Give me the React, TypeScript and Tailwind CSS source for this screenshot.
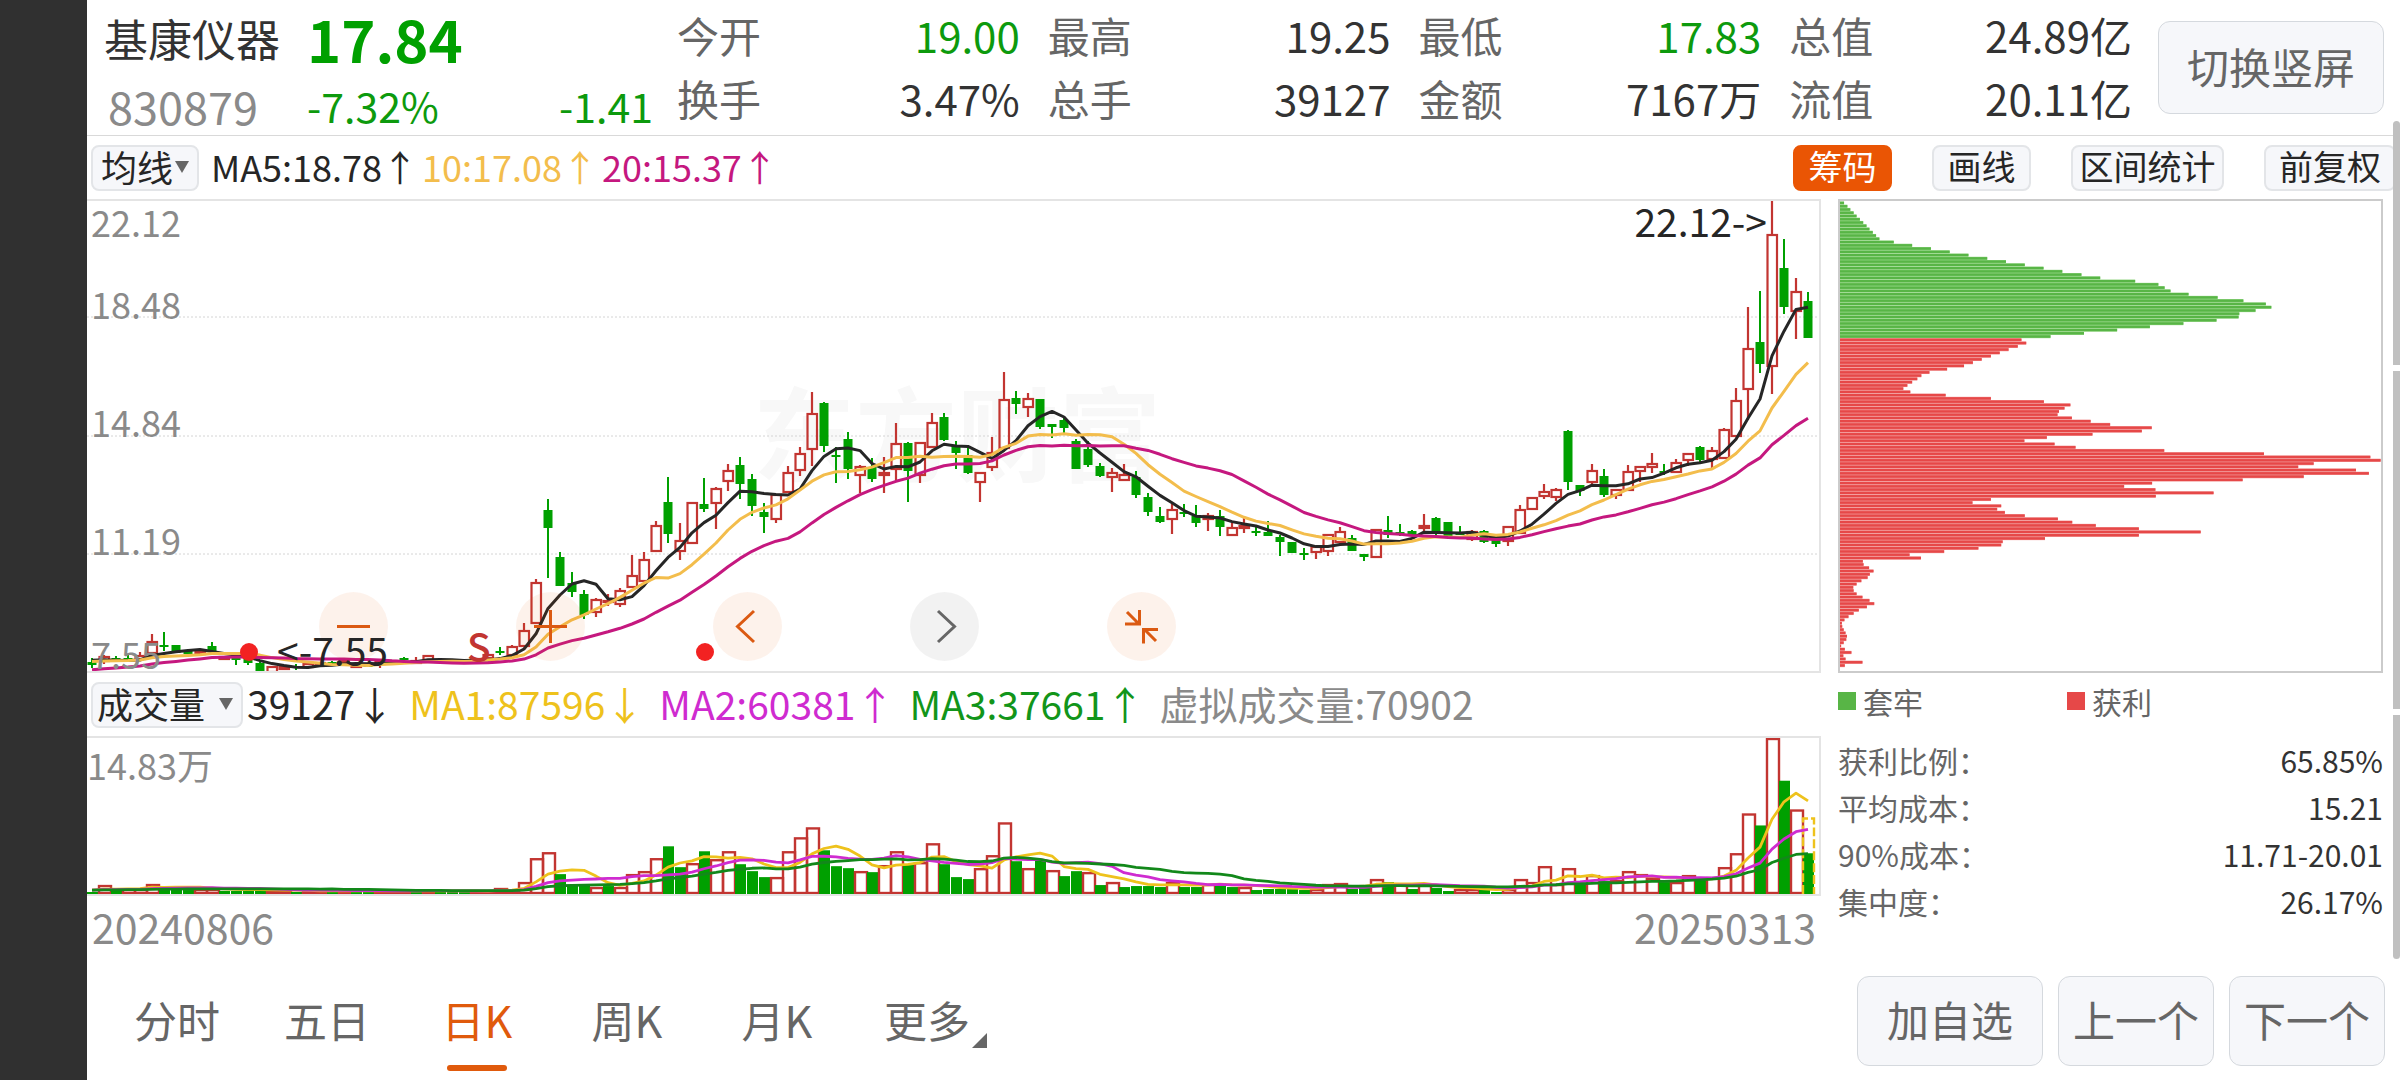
import React, { useState } from 'react';
import { clsx } from 'clsx';

const quotes = [
  { label: '今开', value: '19.00', down: true },
  { label: '最高', value: '19.25' },
  { label: '最低', value: '17.83', down: true },
  { label: '总值', value: '24.89亿' },
  { label: '换手', value: '3.47%' },
  { label: '总手', value: '39127' },
  { label: '金额', value: '7167万' },
  { label: '流值', value: '20.11亿' },
];

const chipStats = [
  { label: '获利比例：', value: '65.85%' },
  { label: '平均成本：', value: '15.21' },
  { label: '90%成本：', value: '11.71-20.01' },
  { label: '集中度：', value: '26.17%' },
];

const periods = ['分时', '五日', '日K', '周K', '月K', '更多'];

const RED = '#c23531';
const GREEN = '#00a000';

// kind, high, body top, body bottom, low (chart units, 0 = 22.12, 472 = 7.55)
type Candle = [string, number, number, number, number];

const candles: Candle[] = [
  ['g', 458, 462, 465, 468], ['r', 455, 457, 461, 464], ['g', 456, 458, 461, 462], ['g', 455, 458, 461, 462],
  ['r', 452, 456, 459, 460], ['r', 434, 442, 453, 456], ['g', 432, 445, 447, 451], ['g', 445, 445, 453, 453],
  ['g', 449, 450, 454, 455], ['r', 449, 452, 454, 456], ['g', 442, 446, 452, 453], ['r', 456, 457, 459, 460],
  ['g', 457, 458, 460, 465], ['g', 457, 458, 463, 465], ['g', 462, 463, 471, 472], ['r', 467, 467, 472, 472],
  ['r', 466, 467, 469, 470], ['g', 464, 466, 468, 470], ['r', 463, 464, 467, 468], ['r', 462, 463, 465, 467],
  ['g', 461, 462, 464, 466], ['r', 459, 461, 463, 465], ['r', 464, 465, 467, 467], ['g', 463, 465, 466, 467],
  ['r', 459, 461, 464, 468], ['r', 460, 461, 463, 464], ['g', 457, 458, 460, 461], ['r', 457, 461, 463, 464],
  ['r', 456, 456, 460, 460], ['r', 458, 460, 462, 464], ['g', 459, 460, 462, 463], ['g', 461, 462, 464, 464],
  ['r', 458, 459, 462, 463], ['r', 454, 455, 458, 459], ['g', 447, 451, 453, 455], ['r', 445, 447, 455, 456],
  ['r', 423, 431, 446, 447], ['r', 379, 383, 423, 423], ['g', 299, 310, 328, 378], ['g', 352, 357, 386, 386],
  ['g', 372, 383, 392, 397], ['g', 390, 394, 415, 419], ['r', 398, 400, 412, 417], ['r', 394, 401, 402, 406],
  ['r', 388, 391, 404, 407], ['r', 355, 376, 387, 387], ['r', 352, 360, 381, 381], ['r', 321, 326, 351, 351],
  ['g', 277, 302, 334, 343], ['r', 323, 341, 351, 360], ['r', 303, 303, 343, 343], ['g', 278, 304, 309, 312],
  ['r', 287, 289, 303, 329], ['r', 264, 271, 281, 291], ['g', 257, 265, 284, 299], ['g', 274, 279, 306, 316],
  ['g', 303, 312, 317, 333], ['r', 295, 295, 319, 323], ['r', 266, 273, 292, 292], ['r', 247, 254, 270, 276],
  ['r', 192, 214, 249, 266], ['g', 202, 203, 246, 252], ['g', 247, 255, 257, 283], ['g', 232, 239, 269, 279],
  ['r', 265, 267, 275, 293], ['g', 258, 267, 279, 282], ['r', 257, 273, 275, 293], ['r', 223, 244, 269, 281],
  ['g', 242, 243, 271, 302], ['r', 243, 243, 275, 283], ['r', 213, 223, 247, 247], ['g', 213, 217, 240, 241],
  ['g', 241, 245, 253, 269], ['g', 246, 255, 273, 274], ['r', 273, 273, 282, 302], ['r', 237, 253, 267, 271],
  ['r', 172, 200, 248, 248], ['g', 191, 198, 204, 214], ['r', 193, 199, 207, 217], ['g', 199, 199, 227, 229],
  ['g', 224, 224, 227, 238], ['g', 217, 220, 228, 233], ['g', 239, 241, 269, 269], ['g', 241, 249, 265, 267],
  ['g', 263, 266, 276, 277], ['r', 268, 273, 277, 292], ['r', 264, 275, 280, 280], ['g', 271, 277, 295, 298],
  ['g', 293, 297, 312, 316], ['g', 307, 316, 322, 323], ['r', 304, 310, 319, 334], ['g', 304, 312, 314, 317],
  ['g', 305, 316, 323, 327], ['r', 313, 316, 319, 331], ['g', 310, 316, 327, 336], ['r', 323, 328, 335, 335],
  ['r', 318, 326, 328, 333], ['g', 327, 331, 333, 336], ['g', 321, 332, 336, 336], ['g', 335, 337, 342, 356],
  ['g', 342, 342, 353, 353], ['g', 348, 353, 355, 360], ['r', 347, 347, 352, 359], ['r', 335, 335, 351, 356],
  ['r', 327, 332, 342, 342], ['g', 335, 338, 351, 351], ['g', 354, 354, 357, 361], ['r', 330, 330, 357, 357],
  ['g', 316, 330, 335, 338], ['g', 324, 332, 334, 336], ['g', 330, 331, 336, 336], ['r', 314, 326, 328, 333],
  ['g', 317, 318, 332, 335], ['g', 322, 322, 336, 338], ['g', 326, 333, 335, 335], ['r', 330, 332, 339, 341],
  ['g', 330, 331, 342, 343], ['g', 338, 339, 344, 347], ['r', 327, 327, 341, 346], ['r', 305, 310, 333, 333],
  ['r', 298, 298, 309, 310], ['r', 284, 292, 296, 299], ['r', 288, 290, 297, 301], ['g', 230, 231, 282, 290],
  ['g', 285, 285, 291, 296], ['r', 264, 271, 282, 285], ['g', 269, 276, 295, 297], ['r', 290, 290, 295, 299],
  ['r', 265, 272, 290, 290], ['r', 267, 267, 271, 282], ['r', 253, 264, 267, 273], ['g', 264, 271, 273, 275],
  ['r', 259, 263, 272, 272], ['r', 254, 254, 260, 266], ['g', 246, 247, 260, 262], ['r', 247, 251, 259, 268],
  ['r', 228, 230, 258, 258], ['r', 188, 201, 236, 236], ['r', 107, 149, 189, 220], ['g', 91, 142, 164, 173],
  ['r', 0, 35, 166, 194], ['g', 39, 68, 107, 114], ['r', 78, 92, 111, 139], ['g', 92, 101, 138, 138],
];

const volumes = [
  2, 8, 4, 4, 4, 9, 7, 6, 4, 4, 4, 3, 3, 3, 4, 3, 2, 2, 2, 2, 3, 2, 2, 2, 3, 2, 2, 2, 3, 2, 2, 2, 2, 2, 5, 3,
  11, 35, 41, 20, 9, 9, 6, 8, 6, 19, 22, 35, 48, 27, 30, 43, 34, 42, 30, 23, 17, 16, 42, 56, 66, 44, 28, 26,
  22, 22, 28, 42, 30, 31, 50, 30, 17, 15, 25, 38, 71, 33, 25, 34, 23, 18, 23, 21, 9, 11, 7, 8, 8, 7, 11, 7,
  7, 9, 11, 7, 6, 4, 5, 5, 5, 4, 4, 9, 10, 5, 6, 14, 12, 9, 5, 9, 6, 3, 4, 4, 4, 2, 4, 14, 11, 27, 9, 25,
  11, 18, 13, 13, 22, 19, 15, 12, 11, 18, 14, 16, 26, 40, 80, 69, 156, 114, 84, 41,
];

const trapped = [
  11, 20, 28, 37, 45, 54, 63, 72, 80, 89, 98, 107, 146, 196, 247, 298, 349, 400, 451, 502, 553, 604, 656, 707,
  802, 865, 882, 898, 947, 1026, 1096, 1157, 1172, 1129, 1085, 1083, 1023, 933, 842, 753, 663, 572,
];

const profit = [
  493, 506, 483, 458, 434, 410, 385, 361, 337, 291, 243, 221, 210, 196, 183, 172, 191, 287, 410, 554, 626, 610,
  595, 591, 630, 681, 734, 847, 820, 686, 562, 501, 583, 640, 881, 1152, 1441, 1469, 1287, 1245, 1402, 1437,
  1260, 1094, 848, 772, 857, 1015, 858, 410, 360, 438, 427, 448, 502, 592, 631, 695, 812, 980, 812, 557, 442,
  438, 376, 283, 189, 220, 62, 64, 79, 91, 81, 75, 58, 45, 36, 37, 45, 61, 80, 93, 73, 51, 37, 23, 12, 5, 6,
  10, 15, 19, 17, 10, 3, 13, 31, 9, 15, 61, 13,
];

const xAt = (i: number) => 5 + i * 12;

const closes = candles.map((c) => (c[0] === 'r' ? c[2] : c[3]));

// closes of the sessions left of the visible range
const earlierCloses = [...Array(10).fill(478), ...Array(5).fill(463), ...Array(4).fill(459)];
const earlierVolumes = Array(19).fill(3);

function average(earlier: number[], data: number[], n: number) {
  const all = [...earlier, ...data];
  return data.map((_, i) => {
    const end = i + earlier.length + 1;
    return all.slice(end - n, end).reduce((a, b) => a + b, 0) / n;
  });
}

const toPoints = (ys: number[]) => ys.map((y, i) => `${xAt(i)},${y.toFixed(1)}`).join(' ');

function CandleChart() {
  const averages = [
    { n: 5, color: '#262626' },
    { n: 10, color: '#f3bd4c' },
    { n: 20, color: '#c5187f' },
  ];
  return (
    <svg viewBox="0 1 1732 470" preserveAspectRatio="none" className="relative block h-full w-full">
      {[117, 236, 354].map((y) => (
        <line key={y} x1="0" x2="1732" y1={y} y2={y} stroke="#d4d4d4" strokeDasharray="2 2" />
      ))}
      {candles.map(([kind, high, top, bottom, low], i) => {
        const x = xAt(i);
        if (kind === 'g') {
          return (
            <g key={i} fill={GREEN}>
              <rect x={x - 1} y={high} width="2" height={low - high} />
              <rect x={x - 4.5} y={top} width="9" height={Math.max(bottom - top, 2)} />
            </g>
          );
        }
        return (
          <g key={i} stroke={RED} strokeWidth="2.2" fill="none">
            <path d={`M${x} ${high}V${top}M${x} ${bottom}V${low}`} />
            <rect x={x - 4.5} y={top} width="9.5" height={Math.max(bottom - top, 1)} />
          </g>
        );
      })}
      {averages.map(({ n, color }) => (
        <polyline
          key={n}
          points={toPoints(average(earlierCloses, closes, n))}
          fill="none"
          stroke={color}
          strokeWidth="3"
          strokeLinejoin="round"
        />
      ))}
    </svg>
  );
}

function VolumeChart() {
  const averages = [
    { n: 5, color: '#eec21c' },
    { n: 10, color: '#cf2bd0' },
    { n: 20, color: '#12881a' },
  ];
  return (
    <svg viewBox="0 0 1732 157" preserveAspectRatio="none" className="block h-full w-full">
      {volumes.map((v, i) => {
        const rising = i > 0 && closes[i] <= closes[i - 1];
        return rising ? (
          <rect key={i} x={xAt(i) - 5} y={157 - v} width="12" height={v - 1} fill="none" stroke={RED} strokeWidth="2.4" />
        ) : (
          <rect key={i} x={xAt(i) - 5} y={157 - v} width="11" height={v} fill={GREEN} />
        );
      })}
      <path d="M1716 157V81H1727V157" fill="none" stroke="#eec21c" strokeWidth="2.4" strokeDasharray="9 3" />
      {averages.map(({ n, color }) => (
        <polyline
          key={n}
          points={toPoints(average(earlierVolumes, volumes, n).map((v) => 156 - v))}
          fill="none"
          stroke={color}
          strokeWidth="2.8"
          strokeLinejoin="round"
        />
      ))}
    </svg>
  );
}

function ChipChart() {
  const pitch = 3.257;
  return (
    <svg viewBox="0 0 1470 470" preserveAspectRatio="none" className="block h-full w-full">
      {[...trapped, ...profit].map((w, i) => {
        const green = i < trapped.length;
        const y = 0.4 + i * pitch;
        return (
          <g key={i}>
            <rect x="0" y={y} width={w} height={pitch} fill={green ? '#8fd47f' : '#f08b8b'} />
            <rect x="0" y={y + 0.4} width={w} height={pitch - 0.9} fill={green ? '#58b546' : '#e64848'} />
          </g>
        );
      })}
    </svg>
  );
}

const roundButtons = [
  { label: '缩小', d: 'M18 34.5H51' },
  { label: '放大', d: 'M18 34.5H51M34.5 18V51' },
  { label: '左移', d: 'M41 19L24.5 34.5L41 50' },
  { label: '右移', d: 'M28 19L44.5 34.5L28 50', muted: true },
  { label: '收起', d: 'M20 20L32 32M18 32H32.5V18M49 49L37 37M51 37.5H36.5V51.5' },
];

function PickList({ label, value, className }: { label: string; value: string; className: string }) {
  return (
    <div className="relative">
      <select
        aria-label={label}
        defaultValue={value}
        className={clsx(
          'block h-[46px] appearance-none rounded-lg border-2 border-[#e3e5e8] bg-[#f6f7fa] pb-1 text-[36px] leading-[38px] text-[#262626]',
          className
        )}
      >
        <option>{value}</option>
      </select>
      <svg viewBox="0 0 14 12" className="pointer-events-none absolute top-4 right-2.5 h-3 w-3.5">
        <path d="M0 0H14L7 12Z" fill="#666" />
      </svg>
    </div>
  );
}

const toolButtons = [
  { name: '筹码', width: 'w-[99px]' },
  { name: '画线', width: 'w-[99px]' },
  { name: '区间统计', width: 'w-[153px]' },
  { name: '前复权', width: 'w-[132px]' },
];

export default function App() {
  const [tool, setTool] = useState('筹码');
  const [period, setPeriod] = useState('日K');

  return (
    <div className="relative flex min-h-screen bg-white font-['Noto_Sans_CJK_SC',sans-serif] leading-none text-[#333]">
      <div className="w-[87px] shrink-0 bg-[#303030]" />

      <div className="flex min-w-0 flex-1 flex-col">
        <header className="flex h-[136px] items-center border-b border-[#d9d9d9] pr-4">
          <div className="grid h-full w-[590px] grid-cols-[203px_1fr_auto] grid-rows-[76px_59px] items-center pr-6 pl-[17px]">
            <h1 className="text-[44px]">基康仪器</h1>
            <strong className="col-span-2 text-[58px] leading-[76px] font-bold text-[#00a000]">17.84</strong>
            <span className="pl-1 text-[45px]  text-[#8a8a8a]">830879</span>
            <span className="text-[41px] text-[#0d9a0d]">-7.32%</span>
            <span className="text-[41px] text-[#0d9a0d]">-1.41</span>
          </div>
          <dl className="grid flex-1 grid-cols-4 gap-x-7 pb-[3px] text-[42px] leading-[63px]">
            {quotes.map((q) => (
              <div key={q.label} className="flex justify-between">
                <dt className="text-[#666]">{q.label}</dt>
                <dd className={clsx(q.down && 'text-[#0d9a0d]')}>{q.value}</dd>
              </div>
            ))}
          </dl>
          <button className="ml-[26px] h-[93px] w-[226px] rounded-xl border border-[#d5d9de] bg-[#f6f7fa] pb-1 text-[42px] text-[#666]">
            切换竖屏
          </button>
        </header>

        <div className="flex h-[63px] items-center pl-1">
          <PickList label="主图指标" value="均线" className="w-[108px] pl-2" />
          <div className="ml-3 flex gap-1 pb-1 text-[36px]">
            <span className="text-[#262626]">MA5:18.78↑</span>
            <span className="text-[#f3bd4c]">10:17.08↑</span>
            <span className="text-[#c5187f]">20:15.37↑</span>
          </div>
          <div className="ml-auto flex gap-10 pr-1">
            {toolButtons.map((b) => (
              <button
                key={b.name}
                onClick={() => setTool(b.name)}
                className={clsx(
                  'h-[46px] rounded-lg border-2 pb-1 text-[34px]',
                  b.width,
                  tool === b.name
                    ? 'border-[#ea5504] bg-[#ea5504] text-white'
                    : 'border-[#e3e5e8] bg-[#f6f7fa] text-[#262626]'
                )}
              >
                {b.name}
              </button>
            ))}
          </div>
        </div>

        <main className="flex gap-[17px] pr-[17px]">
          <section className="min-w-0 flex-1">
            <div className="relative h-[474px] border-2 border-l-0 border-[#e4e4e4]">
              <div className="absolute inset-x-0 top-[178px] pl-2 text-center text-[102px] font-bold text-[#f8f8f8]">
                东方财富
              </div>
              <CandleChart />
              <div className="absolute inset-y-0 left-1 text-[36px] text-[#8a8a8a]">
                <span className="absolute top-0.5">22.12</span>
                <span className="absolute top-[84px]">18.48</span>
                <span className="absolute top-[202px]">14.84</span>
                <span className="absolute top-[320px]">11.19</span>
                <span className="absolute bottom-0">7.55</span>
              </div>
              <span className="absolute top-0 right-[52px] text-[39px] text-[#262626]">22.12-&gt;</span>
              <div className="absolute bottom-2.5 left-[232px] flex gap-32">
                {roundButtons.map((b) => (
                  <button
                    key={b.label}
                    aria-label={b.label}
                    className={clsx(
                      'h-[69px] w-[69px] rounded-full',
                      b.muted ? 'bg-black/5 text-[#666]' : 'bg-[#ea5504]/8 text-[#db5a12]'
                    )}
                  >
                    <svg viewBox="0 0 69 69" fill="none" stroke="currentColor" strokeWidth="3">
                      <path d={b.d} />
                    </svg>
                  </button>
                ))}
              </div>
              <span className="absolute bottom-0.5 left-[190px] text-[39px] text-[#262626]">&lt;-7.55</span>
              <span className="absolute bottom-1.5 left-[380px] text-[39px] font-medium text-[#c23531]">S</span>
              <i className="absolute bottom-2.5 left-[153px] h-[18px] w-[18px] rounded-full bg-[#f22222]" />
              <i className="absolute bottom-2.5 left-[609px] h-[18px] w-[18px] rounded-full bg-[#f22222]" />
            </div>

            <div className="flex h-[63px] items-center pl-1 text-[39px]">
              <PickList label="副图指标" value="成交量" className="w-[152px] pl-1" />
              <div className="ml-1 flex gap-[15px] pb-[3px] whitespace-nowrap">
                <span className="text-[#262626]">39127↓</span>
                <span className="text-[#eec21c]">MA1:87596↓</span>
                <span className="text-[#cf2bd0]">MA2:60381↑</span>
                <span className="text-[#12951a]">MA3:37661↑</span>
                <span className="text-[#8a8a8a]">虚拟成交量:70902</span>
              </div>
            </div>

            <div className="relative h-40 border-2 border-l-0 border-[#e4e4e4]">
              <VolumeChart />
              <span className="absolute top-2 left-0 text-[36px] text-[#8a8a8a]">14.83万</span>
            </div>
            <div className="flex h-[66px] items-center justify-between px-[5px] pb-1.5 text-[41px] text-[#8a8a8a]">
              <span>20240806</span>
              <span>20250313</span>
            </div>
          </section>

          <aside className="w-[545px] shrink-0">
            <div className="h-[474px] border-2 border-[#cbcbcb]">
              <ChipChart />
            </div>
            <div className="grid h-[60px] grid-cols-[229px_1fr] items-center pb-1 text-[30px] text-[#666]">
              <span className="flex items-center gap-[7px]">
                <i className="h-[18px] w-[18px] bg-[#58b546]" />
                套牢
              </span>
              <span className="flex items-center gap-[7px]">
                <i className="h-[18px] w-[18px] bg-[#e64848]" />
                获利
              </span>
            </div>
            <dl className="pt-1 text-[30px] leading-[47px]">
              {chipStats.map((s) => (
                <div key={s.label} className="flex justify-between">
                  <dt className="text-[#666]">{s.label}</dt>
                  <dd>{s.value}</dd>
                </div>
              ))}
            </dl>
          </aside>
        </main>

        <footer className="flex h-[118px] items-center justify-between pr-[15px] pl-[15px] text-[42px] text-[#666]">
          <nav className="flex h-full text-[43px]">
            {periods.map((p) => (
              <button
                key={p}
                onClick={() => setPeriod(p)}
                className={clsx('relative h-full w-[150px] pb-1', period === p && 'text-[#e05a0c]')}
              >
                {p}
                {period === p && (
                  <i className="absolute bottom-[9px] left-1/2 h-1.5 w-[60px] -translate-x-1/2 rounded-full bg-[#e05a0c]" />
                )}
                {p === '更多' && (
                  <svg viewBox="0 0 15 15" className="absolute right-[15px] bottom-8 h-[15px] w-[15px]">
                    <path d="M15 0V15H0Z" fill="#666" />
                  </svg>
                )}
              </button>
            ))}
          </nav>
          <div className="flex gap-[15px]">
            <button className="h-[90px] w-[186px] rounded-xl border border-[#d5d9de] bg-[#f6f7fa] pb-1">加自选</button>
            <button className="h-[90px] w-[156px] rounded-xl border border-[#d5d9de] bg-[#f6f7fa] pb-1">上一个</button>
            <button className="h-[90px] w-[156px] rounded-xl border border-[#d5d9de] bg-[#f6f7fa] pb-1">下一个</button>
          </div>
        </footer>
      </div>

      <div className="absolute top-[121px] right-0 flex w-[7px] flex-col gap-1.5">
        <div className="h-[244px] rounded-t-full bg-[#c0c0c0]" />
        <div className="h-[338px] bg-[#c0c0c0]" />
        <div className="h-[244px] rounded-b-full bg-[#c0c0c0]" />
      </div>
    </div>
  );
}
